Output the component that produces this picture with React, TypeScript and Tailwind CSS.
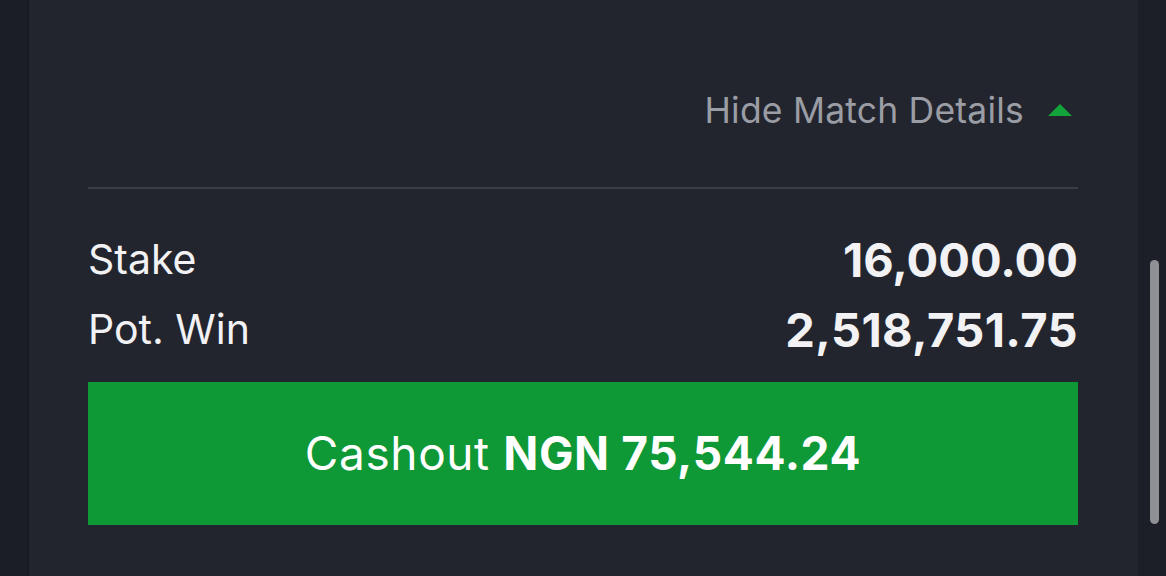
import React from 'react';

const App: React.FC = () => {
  return (
    <div
      className="w-[1166px] h-[576px] flex bg-[#1b1e26] overflow-hidden"
      style={{ fontFamily: 'Inter, "Noto Sans", sans-serif' }}
    >
      {/* left gutter */}
      <div className="w-[29px] shrink-0 bg-[#1b1e26] border-r-2 border-[#181a21]" />

      {/* Card */}
      <div className="w-[1109px] shrink-0 bg-[#23252e] flex flex-col pl-[59px] pr-[60px]">
        {/* Toggle */}
        <div className="h-[187px] flex justify-end items-start pt-[89px] pr-[6px]">
          <button className="flex items-center gap-[24px] text-[#9b9da5] text-[35.5px] leading-[44px] tracking-[0.2px]">
            <span>Hide Match Details</span>
            <svg width="24" height="12" viewBox="0 0 24 12" className="mb-[2px]">
              <polygon points="12,0 24,12 0,12" fill="#13a33b" />
            </svg>
          </button>
        </div>
        <div className="h-[2px] bg-[#3a3d46]" />

        {/* Summary */}
        <div className="flex flex-col pt-[46px] text-[#f2f2f5]">
          <div className="flex justify-between items-center h-[50px]">
            <span className="text-[41px]">Stake</span>
            <span className="text-[47px] font-bold">16,000.00</span>
          </div>
          <div className="flex justify-between items-center h-[50px] mt-[20px]">
            <span className="text-[41px]">Pot. Win</span>
            <span className="text-[47px] font-bold tracking-[0.4px]">2,518,751.75</span>
          </div>
        </div>

        <button className="mt-[27px] h-[143px] bg-[#0f9836] text-white text-[46px] tracking-[0.6px] flex items-center justify-center">
          <span>
            Cashout <span className="font-bold">NGN 75,544.24</span>
          </span>
        </button>
      </div>

      {/* right gutter with scrollbar */}
      <div className="flex-1 bg-[#1c1f27] relative">
        <div className="absolute left-[12px] top-[260px] w-[9px] h-[264px] rounded-full bg-[#8f9096]" />
      </div>
    </div>
  );
};

export default App;
